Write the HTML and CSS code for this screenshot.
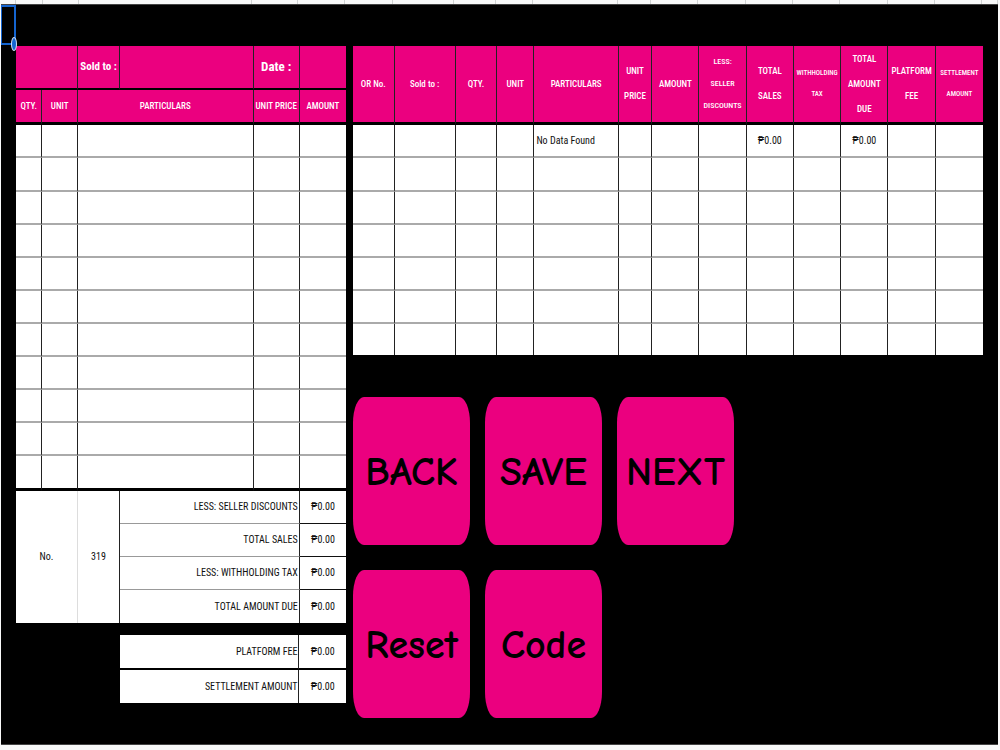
FILE: index.html
```html
<!DOCTYPE html>
<html lang="en">
<head>
<meta charset="utf-8">
<title>Sales Receipt</title>
<link rel="stylesheet" href="styles.css">
</head>
<body>
<div class="ruler"><i class="w15"></i><i class="w27"></i><i class="w36"></i><i class="w175"></i><i class="w46"></i><i class="w47"></i><i class="w48"></i><i class="w61"></i><i class="w42"></i><i class="w37"></i><i class="w85"></i><i class="w33"></i><i class="w47"></i><i class="w48"></i><i class="w47"></i><i class="w47"></i><i class="w48"></i><i class="w47"></i><i class="w47"></i><i class="w15"></i></div>
<main class="sheet">
  <div class="selection"><span class="handle"></span></div>
  <section class="receipt">
    <table class="grid">
      <colgroup><col class="r-qty"><col class="r-unit"><col class="r-sold"><col class="r-part"><col class="r-price"><col class="r-amount"></colgroup>
      <thead>
        <tr class="title"><th colspan="2"></th><th>Sold to :</th><th></th><th class="date">Date :</th><th></th></tr>
        <tr class="heads"><th>QTY.</th><th>UNIT</th><th colspan="2">PARTICULARS</th><th>UNIT PRICE</th><th>AMOUNT</th></tr>
      </thead>
      <tbody class="items">
        <tr><td></td><td></td><td colspan="2"></td><td></td><td></td></tr>
        <tr><td></td><td></td><td colspan="2"></td><td></td><td></td></tr>
        <tr><td></td><td></td><td colspan="2"></td><td></td><td></td></tr>
        <tr><td></td><td></td><td colspan="2"></td><td></td><td></td></tr>
        <tr><td></td><td></td><td colspan="2"></td><td></td><td></td></tr>
        <tr><td></td><td></td><td colspan="2"></td><td></td><td></td></tr>
        <tr><td></td><td></td><td colspan="2"></td><td></td><td></td></tr>
        <tr><td></td><td></td><td colspan="2"></td><td></td><td></td></tr>
        <tr><td></td><td></td><td colspan="2"></td><td></td><td></td></tr>
        <tr><td></td><td></td><td colspan="2"></td><td></td><td></td></tr>
        <tr><td></td><td></td><td colspan="2"></td><td></td><td></td></tr>
      </tbody>
      <tbody class="totals">
        <tr><td class="number" colspan="2" rowspan="4">No.</td><td rowspan="4">319</td><td class="label" colspan="2">LESS: SELLER DISCOUNTS</td><td class="sum">₱0.00</td></tr>
        <tr><td class="label" colspan="2">TOTAL SALES</td><td class="sum">₱0.00</td></tr>
        <tr><td class="label" colspan="2">LESS: WITHHOLDING TAX</td><td class="sum">₱0.00</td></tr>
        <tr><td class="label" colspan="2">TOTAL AMOUNT DUE</td><td class="sum">₱0.00</td></tr>
      </tbody>
    </table>
    <table class="grid fees">
      <colgroup><col><col class="fee-amount"></colgroup>
      <tbody>
        <tr><td class="label">PLATFORM FEE</td><td>₱0.00</td></tr>
        <tr><td class="label">SETTLEMENT AMOUNT</td><td>₱0.00</td></tr>
      </tbody>
    </table>
  </section>
  <section class="records">
    <table class="grid">
      <colgroup><col class="c-or"><col class="c-sold"><col class="c-qty"><col class="c-unit"><col class="c-part"><col class="c-price"><col span="7"></colgroup>
      <thead>
        <tr class="columns"><th>OR No.</th><th>Sold to :</th><th>QTY.</th><th>UNIT</th><th>PARTICULARS</th><th>UNIT<br>PRICE</th><th>AMOUNT</th><th class="mid">LESS:<br>SELLER<br>DISCOUNTS</th><th>TOTAL<br>SALES</th><th class="small">WITHHOLDING<br>TAX</th><th>TOTAL<br>AMOUNT<br>DUE</th><th>PLATFORM<br>FEE</th><th class="small">SETTLEMENT<br>AMOUNT</th></tr>
      </thead>
      <tbody class="items">
        <tr><td></td><td></td><td></td><td></td><td class="text">No Data Found</td><td></td><td></td><td></td><td>₱0.00</td><td></td><td>₱0.00</td><td></td><td></td></tr>
        <tr><td></td><td></td><td></td><td></td><td></td><td></td><td></td><td></td><td></td><td></td><td></td><td></td><td></td></tr>
        <tr><td></td><td></td><td></td><td></td><td></td><td></td><td></td><td></td><td></td><td></td><td></td><td></td><td></td></tr>
        <tr><td></td><td></td><td></td><td></td><td></td><td></td><td></td><td></td><td></td><td></td><td></td><td></td><td></td></tr>
        <tr><td></td><td></td><td></td><td></td><td></td><td></td><td></td><td></td><td></td><td></td><td></td><td></td><td></td></tr>
        <tr><td></td><td></td><td></td><td></td><td></td><td></td><td></td><td></td><td></td><td></td><td></td><td></td><td></td></tr>
        <tr><td></td><td></td><td></td><td></td><td></td><td></td><td></td><td></td><td></td><td></td><td></td><td></td><td></td></tr>
      </tbody>
    </table>
    <div class="actions">
      <button type="button">BACK</button>
      <button type="button">SAVE</button>
      <button type="button">NEXT</button>
      <button type="button">Reset</button>
      <button type="button">Code</button>
    </div>
  </section>
</main>
</body>
</html>
```
FILE: styles.css
```css
* { box-sizing: border-box; }

body {
  margin: 0;
  background: #f8f9f9;
  font-family: "Roboto Condensed", "Open Sans Condensed", Carlito, Lato, "Liberation Sans", sans-serif;
  font-size: 10px;
  line-height: 14px;
  color: #111;
}

/* lower edge of the column headings */
.ruler { display: flex; height: 4px; padding-right: 2px; }
.ruler i { flex-basis: 0; border-right: 1px solid #d0d3d3; }
.w15 { flex-grow: 15; }
.w27 { flex-grow: 27; }
.w33 { flex-grow: 33; }
.w36 { flex-grow: 36; }
.w37 { flex-grow: 37; }
.w42 { flex-grow: 42; }
.w46 { flex-grow: 46; }
.w47 { flex-grow: 47; }
.w48 { flex-grow: 48; }
.w61 { flex-grow: 61; }
.w85 { flex-grow: 85; }
.w175 { flex-grow: 175; }

.sheet {
  position: relative;
  display: grid;
  grid-template-columns: 330fr 630fr;
  align-items: start;
  gap: 7px;
  margin: 0 2px 5px 1px;
  padding: 41px 15px 26px;
  border-top: 1px solid #444;
  border-bottom: 1px solid #444;
  background: #000;
}

.selection {
  position: absolute;
  top: 0;
  left: 0;
  width: 15px;
  height: 40px;
  border: 2px solid #1565d0;
  border-left-width: 1px;
}
.handle {
  position: absolute;
  right: -3px;
  bottom: -8px;
  width: 6px;
  height: 14px;
  border: 1px solid #d5e3f8;
  border-radius: 50%;
  background: #1565d0;
}

.grid {
  width: 100%;
  table-layout: fixed;
  border-collapse: separate;
  border-spacing: 0;
}
.grid th, .grid td {
  height: 33px;
  padding: 0;
  border-right: 1px solid #222;
  text-align: center;
  white-space: nowrap;
}
.grid tr > :last-child { border-right: 0; }
.grid th { background: #eb007f; color: #fff; font-weight: 500; }
.grid td { background: #fff; }

.r-qty { width: 8%; }
.r-unit { width: 10.8%; }
.r-sold { width: 12.7%; }
.r-part { width: 40.5%; }
.r-price { width: 14%; }
.r-amount { width: 14%; }

.grid .title th {
  height: 44px;
  border-bottom: 2px solid #000;
  font-size: 11px;
  font-weight: 700;
}
.grid .title .date { font-size: 13px; }
.grid .heads th { height: 35px; border-bottom: 3px solid #000; }
.grid .heads th, .grid .columns th { font-size: 9px; }
.grid .columns th {
  height: 79px;
  border-bottom: 3px solid #000;
  line-height: 25px;
}
.grid .columns .mid { font-size: 8px; line-height: 22px; }
.grid .columns .small { font-size: 7px; line-height: 21px; }

.items td { border-bottom: 2px solid #aaa; }
.items tr:nth-child(2) td { height: 34px; }
.receipt .items tr:last-child td { height: 35px; border-bottom: 3px solid #000; }
.records .items tr:last-child td { height: 31px; border-bottom: 0; }
.grid .text { padding-left: 2px; text-align: left; }

.totals td { border-bottom: 1px solid #999; }
.totals .sum { border-bottom-color: #111; }
.totals .number { border-right-color: #ddd; }
.totals [rowspan], .totals tr:last-child td { border-bottom: 0; }
.grid .label { padding-right: 1px; text-align: right; }

.fees { width: 68.5%; margin: 12px 0 0 auto; }
.fee-amount { width: 20.6%; }
.fees tr:first-child td { height: 35px; border-bottom: 2px solid #000; }

.c-or { width: 6.6%; }
.c-sold { width: 9.7%; }
.c-qty { width: 6.6%; }
.c-unit { width: 5.9%; }
.c-part { width: 13.4%; }
.c-price { width: 5.3%; }

.actions {
  display: grid;
  grid-template-columns: repeat(3, 117fr) 234fr;
  gap: 25px 15px;
  margin-top: 42px;
}
.actions button {
  height: 148px;
  padding: 2px 0 0;
  border: 0;
  border-radius: 11px / 26px;
  background: #eb007f;
  color: #000;
  font: 700 40px/48px "Comic Sans MS", "Comic Neue", "Liberation Sans", sans-serif;
}
.actions button:nth-child(4) { grid-column: 1; }
```
